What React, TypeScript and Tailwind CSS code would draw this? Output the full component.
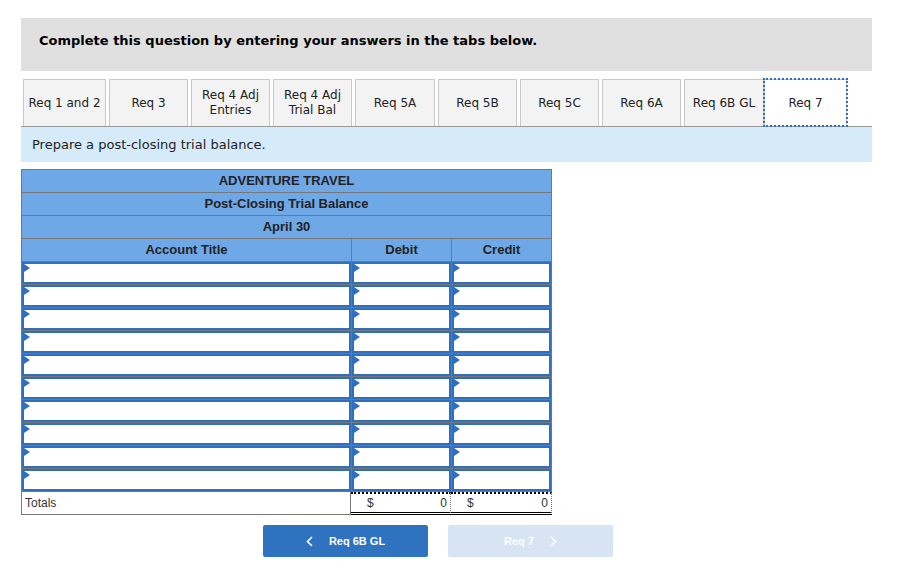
import React from "react";

const tabs = [
  { label: ["Req 1 and 2"], w: "w-[83px]" },
  { label: ["Req 3"], w: "w-[79px]" },
  { label: ["Req 4 Adj", "Entries"], w: "w-[79px]" },
  { label: ["Req 4 Adj", "Trial Bal"], w: "w-[79px]" },
  { label: ["Req 5A"], w: "w-[80px]" },
  { label: ["Req 5B"], w: "w-[79px]" },
  { label: ["Req 5C"], w: "w-[79px]" },
  { label: ["Req 6A"], w: "w-[79px]" },
  { label: ["Req 6B GL"], w: "w-[80px]" },
];

// 입력 칸 왼쪽 위 작은 파란 삼각형
const Flag = () => (
  <svg
    className="absolute left-0 top-0"
    width="6"
    height="8"
    viewBox="0 0 6 8"
  >
    <polygon points="0,0 6,4 0,8" fill="#2f6fbd" />
  </svg>
);

const InputCell = () => (
  <div className="relative h-full w-full bg-white border-2 border-[#2f6fbd]">
    <Flag />
  </div>
);

const App: React.FC = () => {
  const rows = Array.from({ length: 10 });

  return (
    <div className="w-[919px] h-[574px] bg-white pt-[18px] pl-[21px] font-['DejaVu_Sans',sans-serif] text-[#222]">
      {/* 상단 안내 */}
      <div className="w-[851px] h-[53px] bg-[#e0e0e0] pl-[18px] pt-[13px] text-[13px] font-bold text-black">
        Complete this question by entering your answers in the tabs below.
      </div>

      {/* 탭 */}
      <div className="w-[851px] mt-[8px] flex pl-[2px] border-b border-[#999]">
        {tabs.map((t, i) => (
          <div
            key={i}
            className={`${t.w} h-[47px] mr-[3px] bg-[#f3f3f3] border border-b-0 border-[#c8c8c8] flex flex-col items-center justify-center text-[12px] leading-[15px]`}
          >
            {t.label.map((l) => (
              <span key={l}>{l}</span>
            ))}
          </div>
        ))}
        <div className="w-[83px] h-[47px] -ml-[3px] bg-white border border-b-0 border-[#c8c8c8] outline-2 outline-dotted outline-[#2f6fbd] -outline-offset-1 flex items-center justify-center text-[12px]">
          Req 7
        </div>
      </div>

      {/* 설명 */}
      <div className="w-[851px] h-[35px] bg-[#d6ebf9] pl-[11px] flex items-center text-[13px]">
        Prepare a post-closing trial balance.
      </div>

      {/* 시산표 */}
      <div className="mt-[7px] w-[531px] font-['Liberation_Sans',Arial,sans-serif] text-[13px]">
        <div className="border border-b-0 border-[#777] bg-[#6fa8e6] font-bold">
          <div className="h-[23px] flex items-center justify-center border-b border-[#777]">
            ADVENTURE TRAVEL
          </div>
          <div className="h-[23px] flex items-center justify-center border-b border-[#777]">
            Post-Closing Trial Balance
          </div>
          <div className="h-[23px] flex items-center justify-center border-b border-[#777]">
            April 30
          </div>
          <div className="h-[22px] grid grid-cols-[330px_100px_99px]">
            <div className="flex items-center justify-center border-r border-[#777]">
              Account Title
            </div>
            <div className="flex items-center justify-center border-r border-[#777]">
              Debit
            </div>
            <div className="flex items-center justify-center">Credit</div>
          </div>
        </div>

        <div className="border-x border-[#777] bg-[#777]">
          {rows.map((_, i) => (
            <div
              key={i}
              className="h-[23px] grid grid-cols-[330px_100px_99px] pt-px"
            >
              <div className="pr-px">
                <InputCell />
              </div>
              <div className="pr-px">
                <InputCell />
              </div>
              <div>
                <InputCell />
              </div>
            </div>
          ))}
        </div>

        <div className="h-[24px] grid grid-cols-[330px_100px_101px] border-t border-[#777] text-[12px] text-[#333]">
          <div className="border-l border-r border-b border-[#777] pl-[3px] flex items-center">
            Totals
          </div>
          <div className="border-r border-[#777] border-t-2 border-t-black border-dotted border-b-[3px] border-b-black [border-bottom-style:double] flex items-center justify-between pl-[16px] pr-[3px]">
            <span>$</span>
            <span>0</span>
          </div>
          <div className="border-r border-[#777] border-t-2 border-t-black border-dotted border-b-[3px] border-b-black [border-bottom-style:double] flex items-center justify-between pl-[16px] pr-[3px]">
            <span>$</span>
            <span>0</span>
          </div>
        </div>
      </div>

      {/* 이동 버튼 */}
      <div className="mt-[10px] ml-[242px] flex gap-[20px] font-['Liberation_Sans',Arial,sans-serif] text-[11px] font-bold text-white">
        <div className="w-[165px] h-[32px] rounded-[2px] bg-[#2f72c0] flex items-center justify-center gap-[16px]">
          <svg width="7" height="11" viewBox="0 0 7 11">
            <polyline
              points="6,1 1.5,5.5 6,10"
              fill="none"
              stroke="white"
              strokeWidth="1.6"
            />
          </svg>
          <span>Req 6B GL</span>
        </div>
        <div className="w-[165px] h-[32px] rounded-[2px] bg-[#d7e4f3] flex items-center justify-center gap-[16px]">
          <span>Req 7</span>
          <svg width="7" height="11" viewBox="0 0 7 11">
            <polyline
              points="1,1 5.5,5.5 1,10"
              fill="none"
              stroke="white"
              strokeWidth="1.6"
            />
          </svg>
        </div>
      </div>
    </div>
  );
};

export default App;
